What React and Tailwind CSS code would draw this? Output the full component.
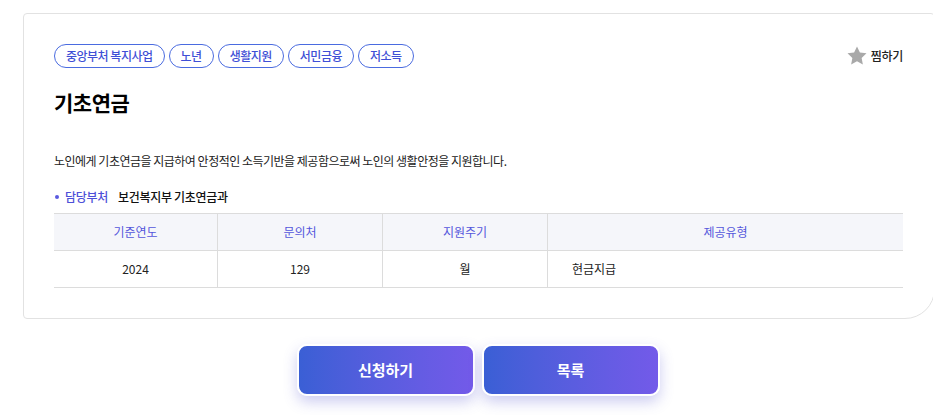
const tags = ['중앙부처 복지사업', '노년', '생활지원', '서민금융', '저소득']

const cols = [
  { head: '기준연도', value: '2024', w: 'w-[164px]', align: 'text-center' },
  { head: '문의처', value: '129', w: 'w-[165px]', align: 'text-center' },
  { head: '지원주기', value: '월', w: 'w-[165px]', align: 'text-center' },
  { head: '제공유형', value: '현금지급', w: 'flex-1', align: 'text-left pl-6' },
]

function Star() {
  return (
    <svg width="20" height="19" viewBox="0 0 24 23" className="shrink-0">
      <path d="M12 0.5l3.5 7.4 8 1-5.9 5.6 1.5 8-7.1-3.9-7.1 3.9 1.5-8L0.5 8.9l8-1z" fill="#a9a9a9" />
    </svg>
  )
}

export default function App() {
  return (
    <div className="h-[415px] w-[933px] overflow-hidden bg-white font-['Noto_Sans_CJK_KR','Noto_Sans',sans-serif] text-[#222]">
      <div className="pt-[13px] pl-[23px]">
        {/* Detail card */}
        <section className="w-[912px] rounded-[4px] rounded-br-[30px] border border-[#e2e2e2] pt-[30px] pr-[30px] pb-[30px] pl-[30px]">
          <div className="flex items-start justify-between">
            <div className="flex gap-1">
              {tags.map((t) => (
                <span
                  key={t}
                  className="flex h-6 items-center rounded-full border border-[#4a6be0] px-[11px] text-[12px] leading-none font-medium tracking-[-0.5px] text-[#3f4fd6]"
                >
                  {t}
                </span>
              ))}
            </div>
            <button className="mt-[2px] mr-[1px] flex items-center gap-1 text-[12px] font-medium tracking-[-0.3px] text-[#222]">
              <Star />
              찜하기
            </button>
          </div>

          <h1 className="mt-[18px] text-[21px] leading-8 font-bold tracking-[-0.5px] text-black">기초연금</h1>

          <p className="mt-[33px] text-[12px] leading-5 tracking-[-0.5px] text-[#222]">
            노인에게 기초연금을 지급하여 안정적인 소득기반을 제공함으로써 노인의 생활안정을 지원합니다.
          </p>

          <div className="mt-[16px] flex items-center text-[12px] leading-5 font-medium tracking-[-0.3px]">
            <span className="ml-[1px] mr-[6px] size-[4px] rounded-full bg-[#5a5ae0]" />
            <span className="text-[#4d4fd8]">담당부처</span>
            <span className="ml-[10px] text-[#111]">보건복지부 기초연금과</span>
          </div>

          {/* Info table */}
          <div className="mt-[6px] w-[849px] border-t border-[#dcdcdc] text-[12px]">
            <div className="flex h-[37px] border-b border-[#dcdcdc] bg-[#f5f6fa]">
              {cols.map((c, i) => (
                <div
                  key={c.head}
                  className={`${c.w} flex items-center justify-center text-[#5456dc] ${i < cols.length - 1 ? 'border-r border-[#dcdcdc]' : ''}`}
                >
                  {c.head}
                </div>
              ))}
            </div>
            <div className="flex h-[37px] border-b border-[#dcdcdc]">
              {cols.map((c, i) => (
                <div
                  key={c.head}
                  className={`${c.w} ${c.align} flex items-center ${c.align.includes('center') ? 'justify-center' : ''} text-[#222] ${i < cols.length - 1 ? 'border-r border-[#dcdcdc]' : ''}`}
                >
                  {c.value}
                </div>
              ))}
            </div>
          </div>
        </section>
      </div>

      {/* Actions */}
      <div className="mt-[25px] flex justify-center gap-[7px] pl-[23px]">
        <button className="h-[52px] w-[178px] rounded-[10px] border-2 border-white bg-gradient-to-r from-[#3a5fd5] to-[#735ae9] text-[15px] font-bold text-white shadow-[0_6px_14px_rgba(90,90,210,0.3)]">
          신청하기
        </button>
        <button className="h-[52px] w-[178px] rounded-[10px] border-2 border-white bg-gradient-to-r from-[#3a5fd5] to-[#735ae9] text-[15px] font-bold text-white shadow-[0_6px_14px_rgba(90,90,210,0.3)]">
          목록
        </button>
      </div>
    </div>
  )
}
